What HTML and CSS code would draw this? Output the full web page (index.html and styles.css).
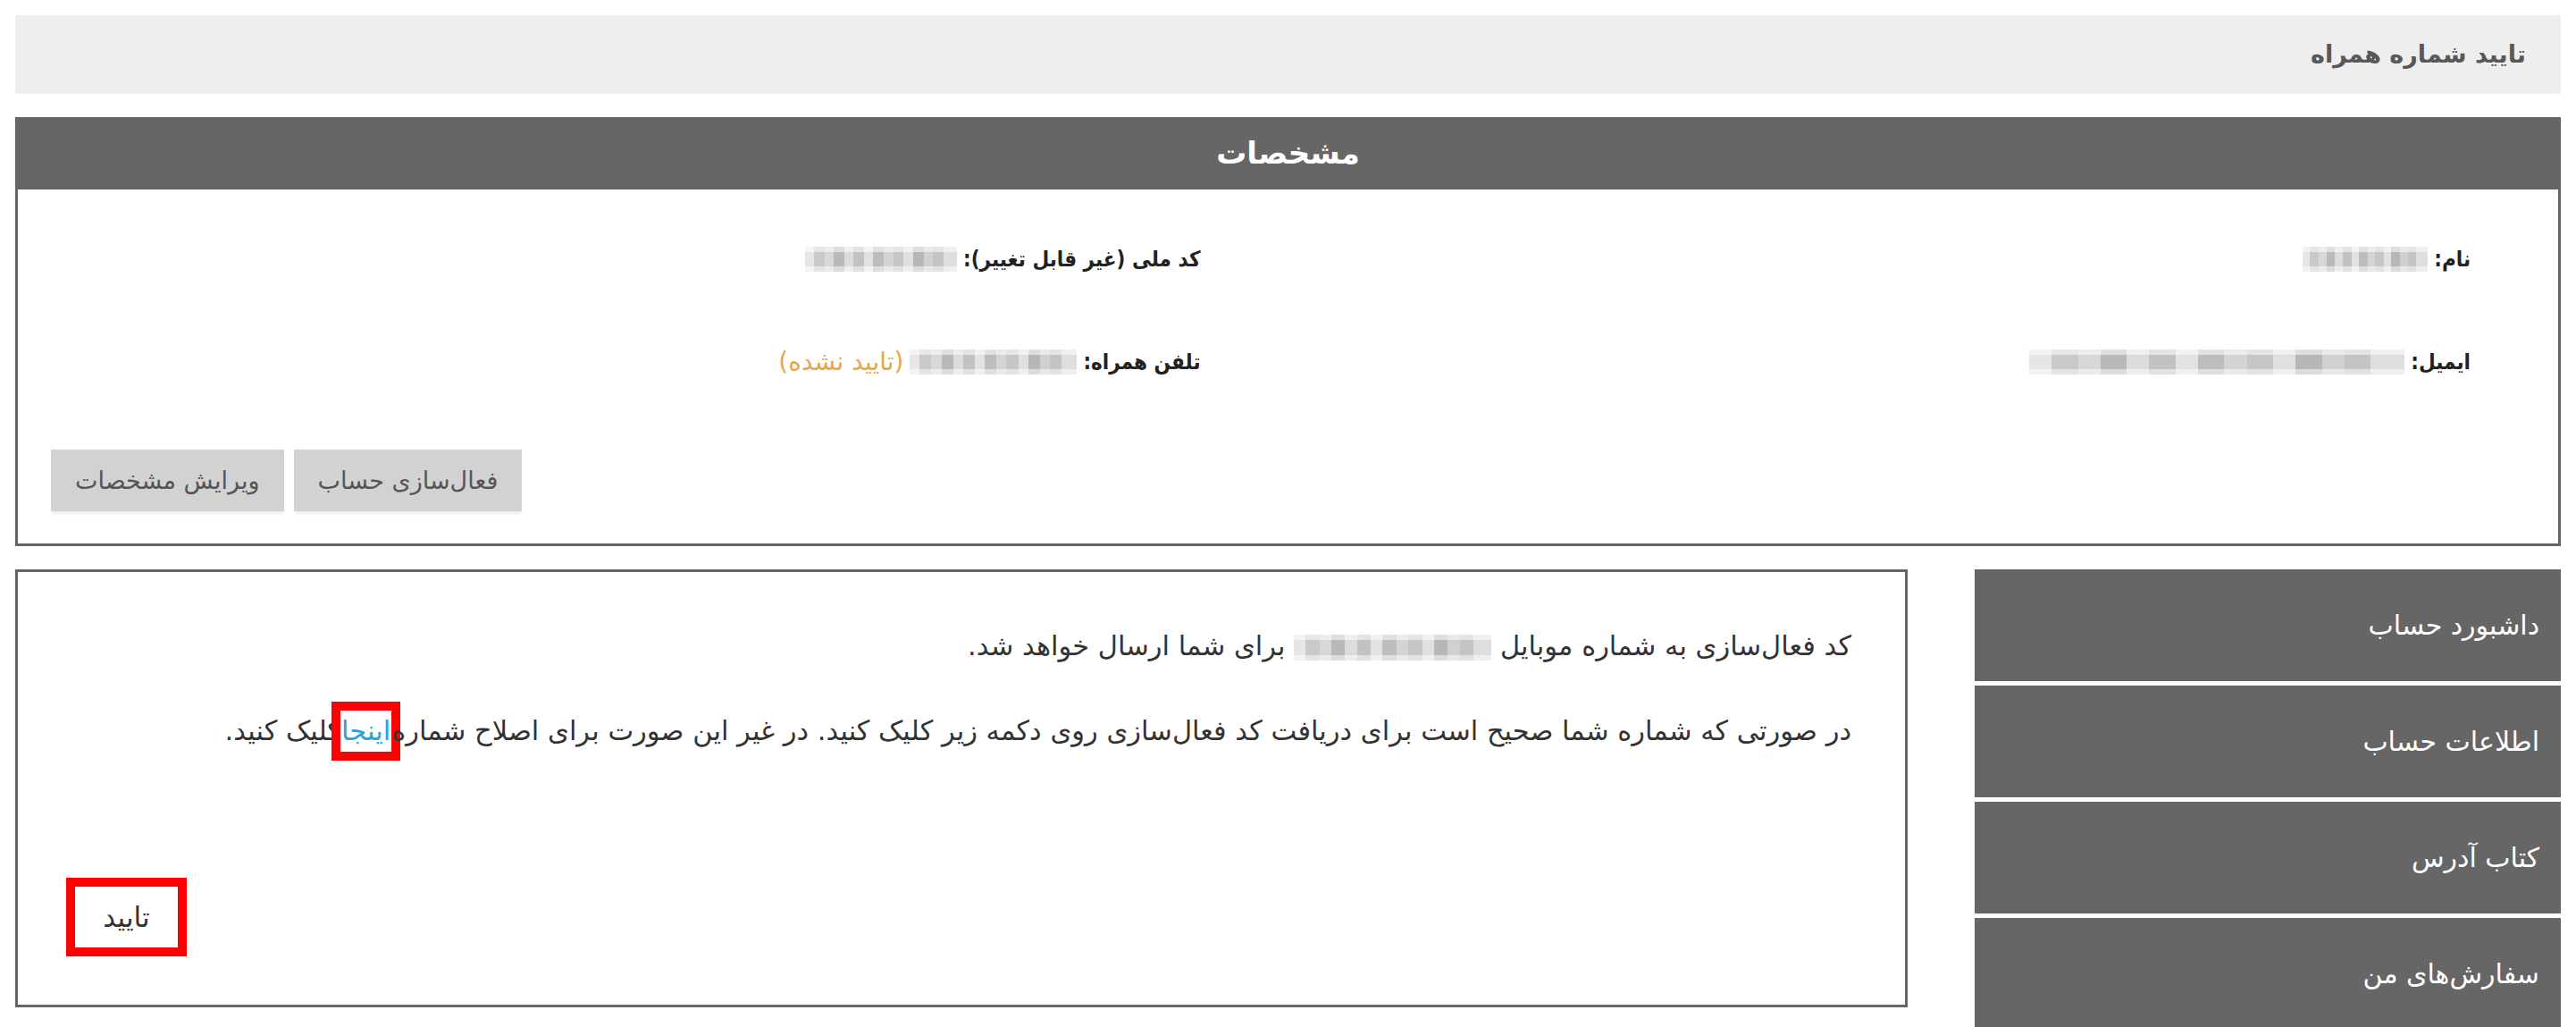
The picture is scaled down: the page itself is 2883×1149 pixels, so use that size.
FILE: index.html
```html
<!DOCTYPE html>
<html lang="fa" dir="rtl">
<head>
<meta charset="utf-8">
<title>تایید شماره همراه</title>
<link rel="stylesheet" href="styles.css">
</head>
<body>
<div class="page">
  <div class="page-title">تایید شماره همراه</div>

  <section class="panel">
    <div class="panel-head">مشخصات</div>
    <div class="panel-body">
      <div class="info-grid">
        <div class="info-item"><span class="label">نام:</span> <span class="blur blur-name"></span></div>
        <div class="info-item"><span class="label">کد ملی (غیر قابل تغییر):</span> <span class="blur blur-code"></span></div>
        <div class="info-item"><span class="label">ایمیل:</span> <span class="blur blur-email"></span></div>
        <div class="info-item"><span class="label">تلفن همراه:</span> <span class="blur blur-phone"></span><span class="unverified">(تایید نشده)</span></div>
      </div>
      <div class="actions">
        <a class="btn btn-activate">فعال&zwnj;سازی حساب</a>
        <a class="btn btn-edit">ویرایش مشخصات</a>
      </div>
    </div>
  </section>

  <div class="lower">
    <nav class="sidebar">
      <a class="side-item">داشبورد حساب</a>
      <a class="side-item">اطلاعات حساب</a>
      <a class="side-item">کتاب آدرس</a>
      <a class="side-item">سفارش&zwnj;های من</a>
    </nav>
    <main class="verify-box">
      <p class="msg">کد فعال&zwnj;سازی به شماره موبایل <span class="blur blur-mobile"></span> برای شما ارسال خواهد شد.</p>
      <p class="msg">در صورتی که شماره شما صحیح است برای دریافت کد فعال&zwnj;سازی روی دکمه زیر کلیک کنید. در غیر این صورت برای اصلاح شماره<a class="here">اینجا</a>کلیک کنید.</p>
      <div class="confirm-row">
        <button class="confirm">تایید</button>
      </div>
    </main>
  </div>
</div>
</body>
</html>
```

FILE: styles.css
```css
html, body {
  margin: 0;
  padding: 0;
  background: #fff;
}

body {
  font-family: "DejaVu Sans", "Noto Sans", sans-serif;
  color: #333;
}

.page {
  direction: rtl;
  padding: 17px 17px 0 17px;
}

.page-title {
  background: #eeeeee;
  height: 88px;
  line-height: 88px;
  padding-right: 39px;
  font-size: 27px;
  font-weight: bold;
  color: #585858;
}

.panel {
  margin-top: 26px;
}

.panel-head {
  background: #666666;
  height: 81px;
  line-height: 81px;
  text-align: center;
  color: #fff;
  font-size: 34px;
  font-weight: bold;
}

.panel-body {
  border: 3px solid #666666;
  border-top: 0;
  height: 396px;
  box-sizing: content-box;
  padding: 0;
}

.info-grid {
  display: grid;
  grid-template-columns: 1fr 1fr;
  row-gap: 75px;
  padding-top: 58px;
}

.info-item {
  height: 40px;
  line-height: 40px;
  padding-right: 98px;
  white-space: nowrap;
  display: flex;
  align-items: center;
  gap: 7px;
}

.label {
  font-family: "DejaVu Sans Condensed", "DejaVu Sans", sans-serif;
  font-stretch: condensed;
  font-weight: bold;
  font-size: 24px;
  color: #222;
}

.unverified {
  color: #e8a54b;
  font-size: 28px;
}

.blur {
  display: inline-block;
  vertical-align: middle;
  height: 28px;
  background:
    linear-gradient(180deg, rgba(255,255,255,0.55) 0 22%, rgba(255,255,255,0) 22% 78%, rgba(255,255,255,0.5) 78% 100%),
    linear-gradient(90deg,
      #e6e6e6 0 6%, #c9c9c9 6% 13%, #d8d8d8 13% 19%, #b9b9b9 19% 26%,
      #dcdcdc 26% 32%, #c2c2c2 32% 39%, #e2e2e2 39% 45%, #bdbdbd 45% 52%,
      #d4d4d4 52% 58%, #c6c6c6 58% 65%, #e0e0e0 65% 71%, #b7b7b7 71% 78%,
      #d0d0d0 78% 84%, #c4c4c4 84% 91%, #dedede 91% 100%);
}

.blur-name { width: 140px; }
.blur-code { width: 170px; }
.blur-email { width: 420px; }
.blur-phone { width: 187px; }
.blur-mobile { width: 221px; height: 29px; }

.actions {
  display: flex;
  justify-content: flex-end;
  gap: 11px;
  margin-top: 78px;
  padding-left: 37px;
}

.btn {
  display: inline-block;
  height: 69px;
  line-height: 69px;
  background: #d2d2d2;
  color: #555;
  font-size: 27px;
  padding: 0 27px;
  box-shadow: 0 4px 3px -1px rgba(0,0,0,0.07);
  cursor: pointer;
}

.lower {
  display: grid;
  grid-template-columns: 656px 1fr;
  column-gap: 75px;
  margin-top: 26px;
}

.sidebar {
  display: flex;
  flex-direction: column;
  gap: 5px;
}

.side-item {
  display: block;
  height: 125px;
  line-height: 125px;
  background: #666666;
  color: #fff;
  font-size: 30px;
  padding-right: 24px;
}

.verify-box {
  border: 3px solid #666666;
  height: 484px;
  box-sizing: content-box;
  padding: 0;
  display: flex;
  flex-direction: column;
}

.msg {
  margin: 0;
  padding: 0 60px 0 64px;
  font-size: 30.5px;
  line-height: 46px;
  color: #333;
  white-space: nowrap;
}

.msg:first-child {
  margin-top: 60px;
}

.msg + .msg {
  margin-top: 49px;
}

.here {
  display: inline-block;
  color: #2ba3da;
  line-height: 46px;
  padding: 0 1px;
  outline: 10px solid #ff0000;
}

.confirm-row {
  display: flex;
  justify-content: flex-end;
  margin-top: 151px;
  padding-left: 64px;
}

.confirm {
  width: 115px;
  height: 68px;
  background: #fff;
  border: 0;
  outline: 10px solid #ff0000;
  font-family: "DejaVu Sans", sans-serif;
  font-size: 31px;
  color: #333;
  padding: 0;
}
```
